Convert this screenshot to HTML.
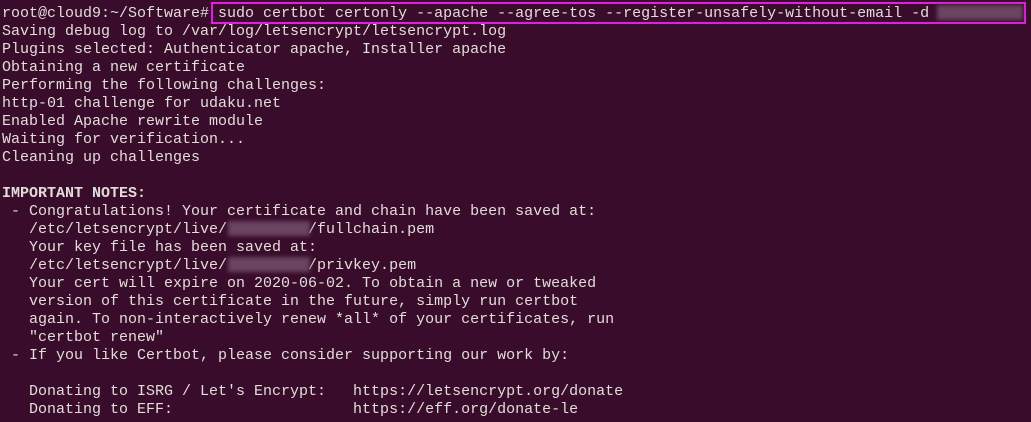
<!DOCTYPE html>
<html><head><meta charset="utf-8"><style>
html,body{margin:0;padding:0;background:#380c2a;width:1031px;height:422px;overflow:hidden}
pre{margin:0;position:absolute;left:2px;top:5px;font-family:"Liberation Mono",monospace;font-size:15px;line-height:18px;color:#e2ddd8}
.box{position:absolute;left:211px;top:2px;width:811px;height:18px;border:2px solid #e020e0}
.blur{position:absolute;background:#6a4460;filter:blur(2px)}
b{font-weight:bold}
</style></head><body>
<pre>root@cloud9:~/Software# sudo certbot certonly --apache --agree-tos --register-unsafely-without-email -d
Saving debug log to /var/log/letsencrypt/letsencrypt.log
Plugins selected: Authenticator apache, Installer apache
Obtaining a new certificate
Performing the following challenges:
http-01 challenge for udaku.net
Enabled Apache rewrite module
Waiting for verification...
Cleaning up challenges

<b>IMPORTANT NOTES:</b>
 - Congratulations! Your certificate and chain have been saved at:
   /etc/letsencrypt/live/         /fullchain.pem
   Your key file has been saved at:
   /etc/letsencrypt/live/         /privkey.pem
   Your cert will expire on 2020-06-02. To obtain a new or tweaked
   version of this certificate in the future, simply run certbot
   again. To non-interactively renew *all* of your certificates, run
   "certbot renew"
 - If you like Certbot, please consider supporting our work by:

   Donating to ISRG / Let's Encrypt:   https://letsencrypt.org/donate
   Donating to EFF:                    https://eff.org/donate-le</pre>
<div class="box"></div>
<div class="blur" style="left:937px;top:5px;width:86px;height:15px"></div>
<div class="blur" style="left:228px;top:221px;width:82px;height:15px"></div>
<div class="blur" style="left:228px;top:257px;width:82px;height:15px"></div>
</body></html>
